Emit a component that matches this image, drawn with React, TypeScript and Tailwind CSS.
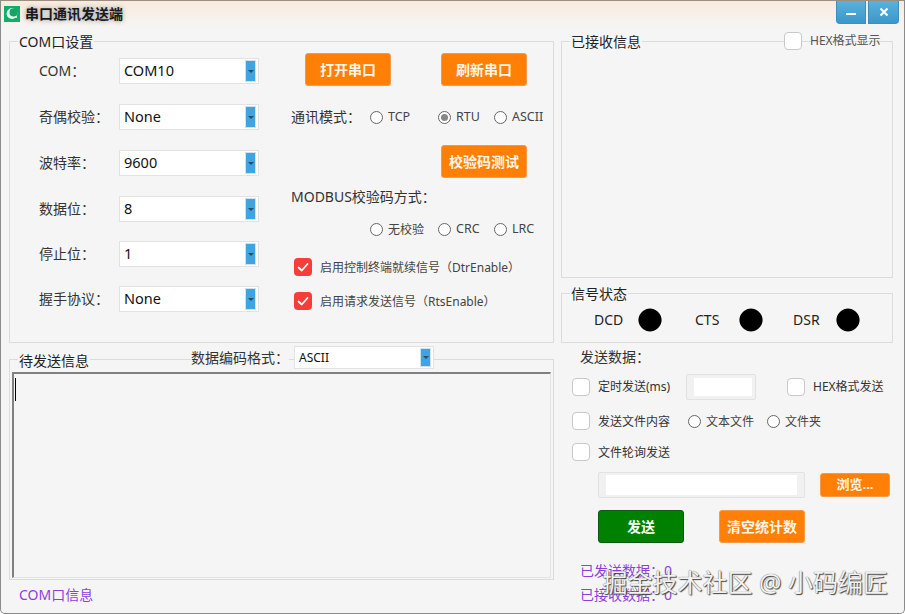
import type { ReactNode } from 'react';

const fontStack = "font-['Noto_Sans','Noto_Sans_CJK_SC',sans-serif]";

function Group({ title, className, legendTop = 'top-[-10px]', children }: { title: string; className: string; legendTop?: string; children?: ReactNode }) {
  return (
    <div className={`relative border border-[#dcdcdc] ${className}`}>
      <span className={`absolute left-2 h-5 bg-[#f5f5f5] px-px text-sm leading-5 text-[#222] ${legendTop}`}>{title}</span>
      {children}
    </div>
  );
}

function Combo({ value, small }: { value: string; small?: boolean }) {
  return (
    <div className={`flex items-center justify-between border border-[#e2e2e2] bg-white pl-1 pr-[2px] text-[#111] ${small ? 'h-[23px] w-[140px] text-xs' : 'h-[26px] w-[140px] text-[14.5px]'}`}>
      <span>{value}</span>
      <span className={`flex w-[11px] items-center justify-center border border-[#cfe3ee] bg-[#3fa4e2] ${small ? 'h-[19px]' : 'h-[22px]'}`}>
        <span className="border-x-[3px] border-t-[3px] border-x-transparent border-t-[#24506e]" />
      </span>
    </div>
  );
}

function Radio({ label, checked, width, cjk }: { label: string; checked?: boolean; width: string; cjk?: boolean }) {
  return (
    <div className={`flex items-center gap-[5px] text-[#444] ${cjk ? 'text-xs' : 'text-[12.5px]'} ${width}`}>
      <span className="flex size-[13px] shrink-0 items-center justify-center rounded-full border border-[#666] bg-white">
        {checked && <span className="size-[7px] rounded-full bg-[#888]" />}
      </span>
      <span className="pt-px">{label}</span>
    </div>
  );
}

function Box({ checked }: { checked?: boolean }) {
  if (checked) {
    return (
      <div className="flex size-[18px] shrink-0 items-center justify-center rounded-[4px] bg-[#f63d3a]">
        <svg width="14" height="14" viewBox="0 0 14 14" fill="none" stroke="#fff" strokeWidth="1.8" strokeLinecap="round" strokeLinejoin="round">
          <path d="M2.5 7.5 5.8 10.5 11.5 4" />
        </svg>
      </div>
    );
  }
  return <div className="size-[18px] shrink-0 rounded-[4px] border border-[#c9c9c9] bg-white" />;
}

function OrangeButton({ label, className = 'h-[33px] w-[86px] text-sm' }: { label: string; className?: string }) {
  return (
    <div className={`flex shrink-0 items-center justify-center rounded-[3px] border border-[#f59a4a] bg-[#ff7f07] font-bold text-[#fff6e8] ${className}`}>
      {label}
    </div>
  );
}

function Lamp({ label, labelWidth, className }: { label: string; labelWidth: string; className: string }) {
  return (
    <div className={`flex items-center ${className}`}>
      <span className={`text-sm text-[#222] ${labelWidth}`}>{label}</span>
      <svg width="24" height="24" viewBox="0 0 24 24">
        <path d="M8 1.2Q12 -.4 16 1.2L19 3 21 5Q22.5 7 22.8 8 24.4 12 22.8 16 22.5 17 21 19L19 21 16 22.8Q12 24.4 8 22.8L5 21 3 19Q1.5 17 1.2 16 -.4 12 1.2 8 1.5 7 3 5L5 3Z" fill="#000" />
      </svg>
    </div>
  );
}

export default function App() {
  const comboRows = [
    ['COM：', 'COM10', ''],
    ['奇偶校验：', 'None', 'mt-5'],
    ['波特率：', '9600', 'mt-5'],
    ['数据位：', '8', 'mt-5'],
    ['停止位：', '1', 'mt-[19px]'],
    ['握手协议：', 'None', 'mt-[19px]'],
  ];

  return (
    <div className={`relative h-[614px] w-[905px] overflow-hidden rounded-b-[5px] border border-[#8b8b8b] border-t-[#9b8f84] bg-[#f5f5f5] ${fontStack}`}>
      {/* title bar */}
      <div className="flex h-7 items-start justify-between bg-gradient-to-b from-[#f9ebdd] to-[#f5f5f5] pl-[3px] pr-[5px]">
        <div className="mt-[5px] flex items-center gap-[5px]">
          <svg width="16" height="16" viewBox="0 0 16 16">
            <rect width="16" height="16" fill="#0fae6b" />
            <circle cx="8" cy="7.5" r="5.4" fill="#e9fff4" />
            <circle cx="9.6" cy="6.4" r="4.1" fill="#14a567" />
            <circle cx="12" cy="11" r="1" fill="#e9fff4" />
          </svg>
          <span className="text-sm font-bold leading-4 text-[#1a1a1a] [text-shadow:0_0_5px_#8d8d8d]">串口通讯发送端</span>
        </div>
        <div className="flex gap-[2px]">
          <div className="flex h-[23px] w-[30px] items-center justify-center rounded-bl-[4px] border border-t-0 border-[#3a8fc0] bg-gradient-to-b from-[#57b2dc] to-[#3b98c9]">
            <span className="mt-[4px] h-[2px] w-[10px] bg-white" />
          </div>
          <div className="flex h-[23px] w-[31px] items-center justify-center rounded-br-[4px] border border-t-0 border-[#3a8fc0] bg-gradient-to-b from-[#57b2dc] to-[#3b98c9]">
            <svg width="10" height="10" viewBox="0 0 10 10" stroke="#fff" strokeWidth="2"><path d="M1.5 1.5 8.5 8.5M8.5 1.5 1.5 8.5" /></svg>
          </div>
        </div>
      </div>

      <div className="flex gap-[7px] pl-2 pt-3">
        {/* left column */}
        <div className="w-[545px]">
          <Group title="COM口设置" className="flex h-[302px]">
            <div className="flex w-[281px] shrink-0 flex-col pl-[29px] pt-4">
              {comboRows.map(([label, value, gap]) => (
                <div key={label} className={`flex items-center ${gap}`}>
                  <span className="w-20 text-sm text-[#333]">{label}</span>
                  <Combo value={value} />
                </div>
              ))}
            </div>
            <div className="flex flex-col pt-[11px]">
              <div className="ml-[14px] flex gap-[50px]">
                <OrangeButton label="打开串口" />
                <OrangeButton label="刷新串口" />
              </div>
              <div className="mt-[21px] flex h-5 items-center">
                <span className="w-[79px] text-sm text-[#333]">通讯模式：</span>
                <Radio label="TCP" width="w-[68px]" />
                <Radio label="RTU" checked width="w-[56px]" />
                <Radio label="ASCII" width="w-[56px]" />
              </div>
              <OrangeButton label="校验码测试" className="ml-[150px] mt-[18px] h-[33px] w-[86px] text-sm" />
              <div className="mt-[9px] h-5 text-sm leading-5 text-[#333]">MODBUS校验码方式：</div>
              <div className="ml-[79px] mt-3 flex h-5 items-center">
                <Radio label="无校验" cjk width="w-[68px]" />
                <Radio label="CRC" width="w-[56px]" />
                <Radio label="LRC" width="w-[56px]" />
              </div>
              <div className="ml-[3px] mt-[19px] flex items-center gap-2 text-xs text-[#444]">
                <Box checked />
                <span className="pt-[2px]">启用控制终端就续信号（DtrEnable）</span>
              </div>
              <div className="ml-[3px] mt-4 flex items-center gap-2 text-xs text-[#444]">
                <Box checked />
                <span className="pt-[2px]">启用请求发送信号（RtsEnable）</span>
              </div>
            </div>
          </Group>

          <Group title="待发送信息" legendTop="top-[-9px]" className="mt-4 h-[221px] px-[2px] pt-[12px]">
            <div className="absolute left-[181px] top-[-14px] flex items-center gap-[5px]">
              <span className="bg-[#f5f5f5] text-sm text-[#333]">数据编码格式：</span>
              <Combo value="ASCII" small />
            </div>
            <div className="h-[206px] border-l-2 border-t-2 border-l-[#808080] border-t-[#808080] border-r border-b border-r-[#e4e4e4] border-b-[#e4e4e4] bg-[#f5f5f5] pl-px pt-1">
              <div className="h-[23px] w-px bg-black" />
            </div>
          </Group>

          <div className="ml-[10px] mt-[5px] h-5 text-sm leading-5 text-[#8d3fe0]">COM口信息</div>
        </div>

        {/* right column */}
        <div className="w-[332px]">
          <Group title="已接收信息" className="h-[237px]">
            <div className="absolute left-[222px] top-[-10px] flex items-center gap-2 text-xs text-[#555]">
              <Box />
              <span>HEX格式显示</span>
            </div>
          </Group>

          <Group title="信号状态" className="mt-[15px] flex h-[50px] items-start pt-[14px]">
            <Lamp label="DCD" labelWidth="w-11" className="ml-[32px]" />
            <Lamp label="CTS" labelWidth="w-11" className="ml-[33px]" />
            <Lamp label="DSR" labelWidth="w-[43px]" className="ml-[30px]" />
          </Group>

          <div className="ml-[11px]">
            <div className="ml-2 mt-1 h-5 text-sm leading-5 text-[#333]">发送数据：</div>
            <div className="mt-[7px] flex h-[26px] items-center text-xs text-[#333]">
              <Box />
              <span className="ml-2 w-[88px]">定时发送(ms)</span>
              <div className="h-[26px] w-[70px] rounded-[2px] border border-[#e2e2e2] bg-[#f1f1f1] py-[3px] pl-[7px] pr-[3px]">
                <div className="h-full bg-white" />
              </div>
              <div className="ml-[31px]"><Box /></div>
              <span className="ml-2 whitespace-nowrap">HEX格式发送</span>
            </div>
            <div className="mt-3 flex h-[18px] items-center text-xs text-[#333]">
              <Box />
              <span className="ml-2 w-[90px] pt-[2px]">发送文件内容</span>
              <Radio label="文本文件" cjk width="w-[79px]" />
              <Radio label="文件夹" cjk width="w-[60px]" />
            </div>
            <div className="mt-[13px] flex h-[18px] items-center text-xs text-[#333]">
              <Box />
              <span className="ml-2 pt-[2px]">文件轮询发送</span>
            </div>
            <div className="ml-[26px] mt-[11px] flex items-center gap-[15px]">
              <div className="h-[26px] w-[207px] rounded-[2px] border border-[#e2e2e2] bg-[#f1f1f1] px-[7px] py-[2px]">
                <div className="h-full bg-white" />
              </div>
              <OrangeButton label="浏览..." className="h-6 w-[70px] text-[13px]" />
            </div>
            <div className="ml-[26px] mt-3 flex gap-[35px]">
              <div className="flex h-[33px] w-[86px] items-center justify-center rounded-[3px] border border-[#0a5c0a] bg-[#008000] text-sm font-bold text-[#f2fff2]">发送</div>
              <OrangeButton label="清空统计数" />
            </div>
            <div className="ml-2 mt-[18px] h-5 text-sm leading-5 text-[#8d3fe0]">已发送数据：0</div>
            <div className="ml-2 mt-1 h-5 text-sm leading-5 text-[#8d3fe0]">已接收数据：0</div>
          </div>
        </div>
      </div>

      {/* watermark sits over the counters */}
      <div className="absolute right-[16px] top-[565px] whitespace-nowrap text-[25px] leading-8 text-[#f2f2f2] [text-shadow:1px_1px_1px_#444,0_0_1px_#444]">
        掘金技术社区 @ 小码编匠
      </div>
    </div>
  );
}
